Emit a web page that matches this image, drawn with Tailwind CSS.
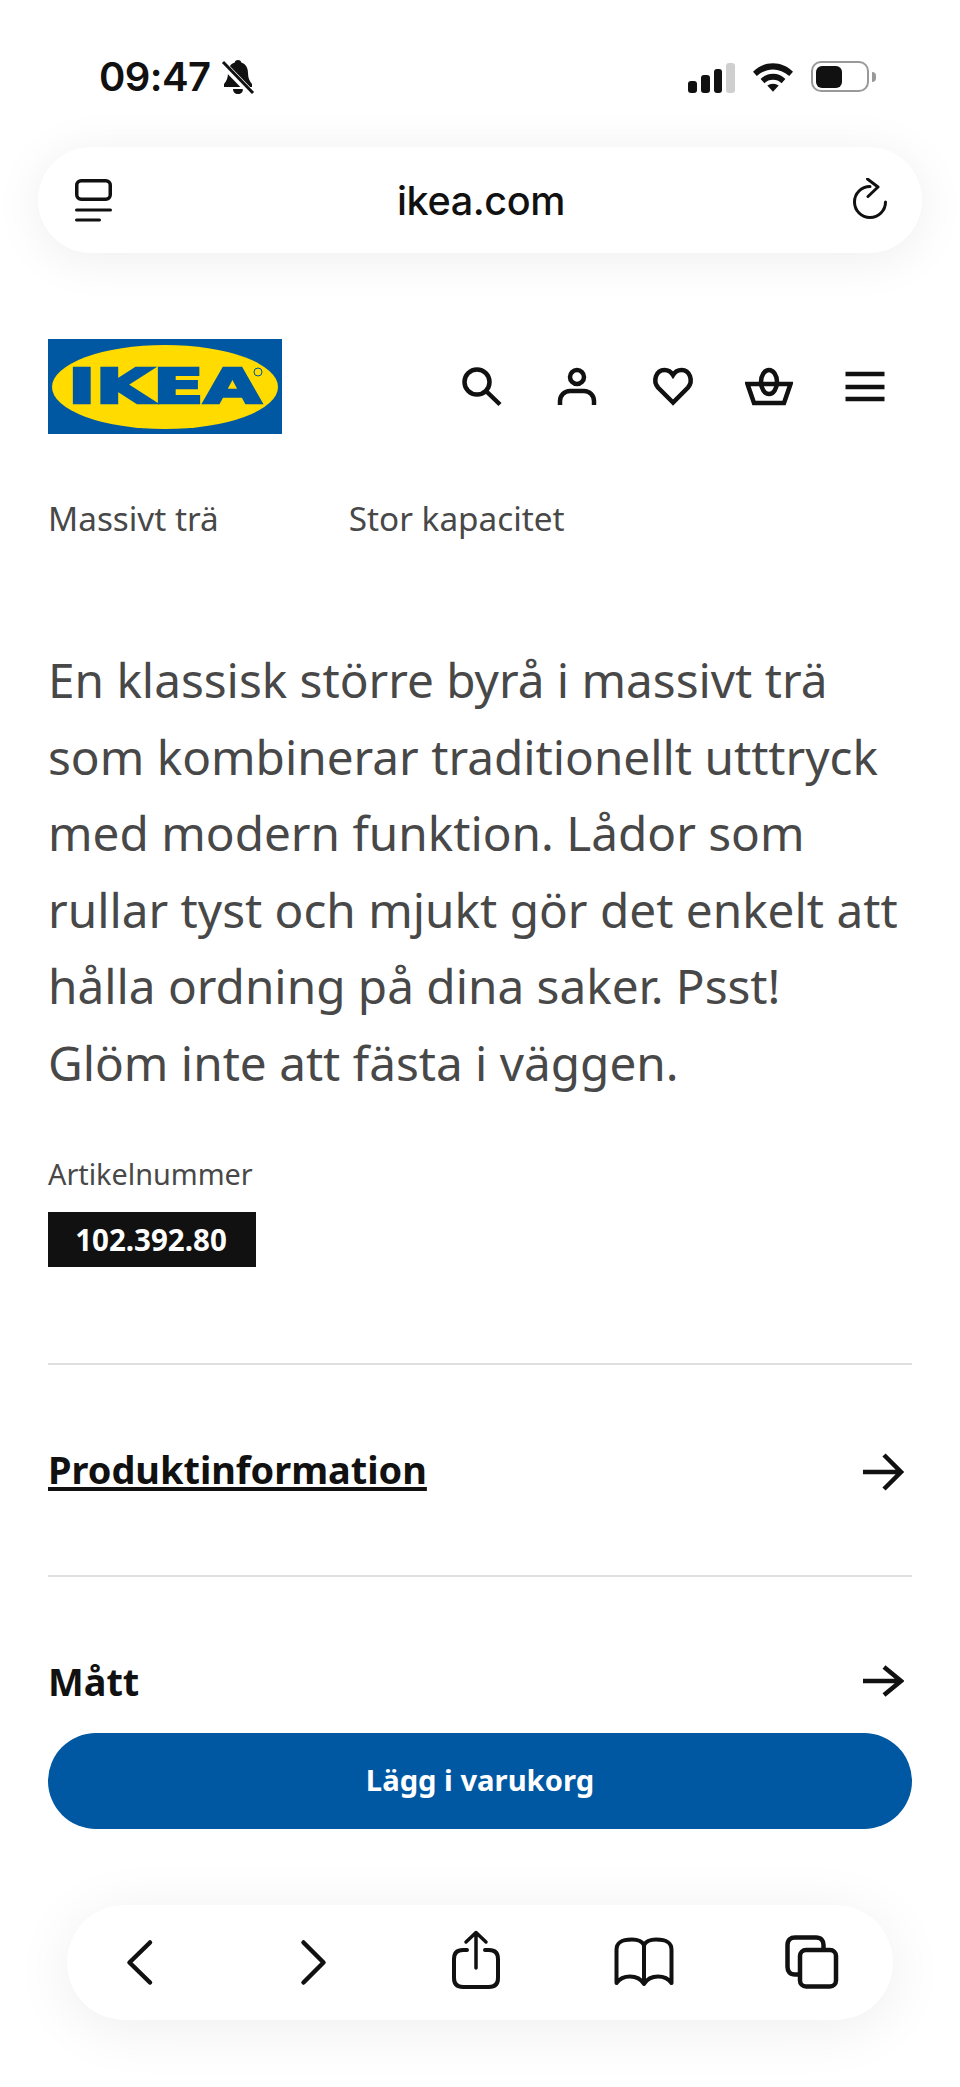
<!DOCTYPE html>
<html lang="sv">
<head>
    <meta charset="UTF-8">
    <meta name="viewport" content="width=device-width, initial-scale=1.0">
    <title>IKEA</title>
    <script src="https://cdn.jsdelivr.net/npm/@tailwindcss/browser@4"></script>
</head>
<body class="bg-white font-['Noto_Sans',sans-serif] text-[#111111]">
<div class="w-[960px] h-[2087px] overflow-hidden flex flex-col">

    <!-- Status bar -->
    <div class="h-[147px] pt-[54px] pl-[99px] pr-[84px] flex items-start justify-between">
        <div class="flex items-center gap-[11px] h-[46px]">
            <span class="font-['Inter',sans-serif] font-semibold text-[40px] leading-[46px] tracking-[-0.6px]">09:47</span>
            <svg width="34" height="36" viewBox="0 0 34 36" fill="#111">
                <path d="M17 1c-2 0-3 1-3.300 2.500C9 5 7 9 7 14c0 5-1.500 8-4 11v3h28v-3c-2.500-3-4-6-4-11 0-5-2-9-6.700-10.500C20 2 19 1 17 1z"/>
                <path d="M12 30h10c0 3-2 5-5 5s-5-2-5-5z"/>
                <path d="M1 4 31 35" stroke="#fff" stroke-width="7"/>
                <path d="M2 3 32 34" stroke="#111" stroke-width="3"/>
            </svg>
        </div>
        <div class="flex items-start gap-[18px] h-[46px] pt-[9px]">
            <div class="flex items-end gap-[4px] h-[30px] w-[47px]">
                <div class="w-[9px] h-[12px] rounded-[3px] bg-[#111]"></div>
                <div class="w-[9px] h-[18px] rounded-[3px] bg-[#111]"></div>
                <div class="w-[9px] h-[24px] rounded-[3px] bg-[#111]"></div>
                <div class="w-[9px] h-[30px] rounded-[3px] bg-[#cfcfcf]"></div>
            </div>
            <svg width="40" height="29" viewBox="0 0 42 30" fill="#111">
                <path d="M21 0C13 0 6 3 0 9l4 4.500C9 9 15 6.500 21 6.500S33 9 38 13.500L42 9C36 3 29 0 21 0z"/>
                <path d="M21 11c-5 0-9.500 2-13 5.500l4 4.500c2.500-2.500 5.500-3.700 9-3.700s6.500 1.200 9 3.700l4-4.500C30.500 13 26 11 21 11z"/>
                <path d="M21 21.500c-2.500 0-4.500 .8-6 2l6 6.500 6-6.500c-1.500-1.200-3.500-2-6-2z"/>
            </svg>
            <div class="flex items-center -mt-[2px] gap-[3px]">
                <div class="w-[58px] h-[31px] rounded-[10px] border-[2.500px] border-[#999999] p-[2.500px]">
                    <div class="w-[26px] h-full rounded-[6px] bg-[#111]"></div>
                </div>
                <div class="w-[4px] h-[10px] rounded-r-full bg-[#999999]"></div>
            </div>
        </div>
    </div>

    <!-- Address bar -->
    <div class="mx-[38px] h-[106px] shrink-0 rounded-[53px] bg-white shadow-[0_6px_50px_rgba(0,0,0,0.07)] flex items-center justify-between pl-[37px] pr-[34px]">
        <svg width="37" height="44" viewBox="0 0 37 44" fill="none" stroke="#111" class="mt-[2px]">
            <rect x="1.750" y="1.750" width="33.500" height="18.500" rx="4.500" stroke-width="3.500"/>
            <path d="M1.500 31h34" stroke-width="3" stroke-linecap="round"/>
            <path d="M1.500 41h23" stroke-width="3" stroke-linecap="round"/>
        </svg>
        <span class="font-['Inter',sans-serif] font-medium text-[39.600px] leading-[46px] tracking-[-0.4px] mt-[2px]">ikea.com</span>
        <svg width="38" height="44" viewBox="0 0 38 44" fill="none" stroke="#111" stroke-width="3" stroke-linecap="round" stroke-linejoin="round">
            <path d="M20 8.500A15.500 15.500 0 1 0 35.500 24"/>
            <path d="M17.500 1 28 9 18 18.500"/>
        </svg>
    </div>

    <!-- Logo and navigation -->
    <div class="mt-[86px] pl-[48px] pr-[71px] flex items-center justify-between">
        <svg width="234" height="95" viewBox="0 0 234 95">
            <rect width="234" height="95" fill="#0058a3"/>
            <ellipse cx="117" cy="48" rx="113" ry="42" fill="#ffdb00"/>
            <text x="20" y="64" font-family="DejaVu Sans" font-weight="700" font-size="48" fill="#0058a3" stroke="#0058a3" stroke-width="2.500" textLength="193" lengthAdjust="spacingAndGlyphs">IKEA</text>
            <circle cx="210" cy="33" r="4" fill="none" stroke="#0058a3" stroke-width="1"/>
        </svg>
        <div class="flex items-center gap-[48px]">
            <svg width="48" height="48" viewBox="0 0 48 48" fill="none" stroke="#111" stroke-width="4.500" class="translate-x-[1px]">
                <circle cx="19" cy="19" r="12.500"/>
                <path d="M28 28l14 13.500"/>
            </svg>
            <svg width="48" height="48" viewBox="0 0 48 48" fill="none" stroke="#111" stroke-width="4.500">
                <circle cx="24" cy="14" r="7"/>
                <path d="M7 42v-4a10 10 0 0 1 10-10h14a10 10 0 0 1 10 10v4"/>
            </svg>
            <svg width="48" height="48" viewBox="0 0 48 48" fill="none" stroke="#111" stroke-width="4.500">
                <path d="M24 39.500L9 24.500C3.500 18 7 7 15.500 7c4 0 7 2.500 8.500 5 1.500-2.500 4.500-5 8.500-5C41 7 44.500 18 39 24.500z"/>
            </svg>
            <svg width="48" height="48" viewBox="0 0 48 48" fill="none" stroke="#111" stroke-width="4.500">
                <path d="M2.500 21h43l-6.500 19H9z"/>
                <ellipse cx="24" cy="19" rx="8" ry="12"/>
            </svg>
            <svg width="48" height="48" viewBox="0 0 48 48" fill="none" stroke="#111" stroke-width="4.500">
                <path d="M4.500 11h39M4.500 24h39M4.500 36h39"/>
            </svg>
        </div>
    </div>

    <!-- Tags -->
    <div class="mt-[59px] px-[48px] flex gap-[130px] text-[33.300px] leading-[50px] text-[#484848]">
        <span>Massivt trä</span>
        <span>Stor kapacitet</span>
    </div>

    <!-- Description -->
    <p class="mt-[99px] px-[48px] text-[47.700px] leading-[76.600px] text-[#484848]">En klassisk större byrå i massivt trä som kombinerar traditionellt utttryck med modern funktion. Lådor som rullar tyst och mjukt gör det enkelt att hålla ordning på dina saker. Psst! Glöm inte att fästa i väggen.</p>

    <!-- Article number -->
    <div class="mt-[52px] px-[48px] text-[28.800px] leading-[40px] text-[#484848]">Artikelnummer</div>
    <div class="mt-[18px] ml-[48px] w-[208px] h-[55px] pr-[2px] bg-[#111111] text-white font-bold text-[29.500px] leading-[55px] text-center">102.392.80</div>

    <!-- Sections -->
    <div class="mt-[96px] mx-[48px] border-t-[2px] border-[#dfdfdf] h-[212px] flex items-center justify-between pr-[8px] pb-[2px]">
        <span class="font-bold text-[37.900px] leading-[50px] underline underline-offset-[3px] decoration-[4px]">Produktinformation</span>
        <svg width="42" height="40" viewBox="0 0 42 40" fill="none" stroke="#111" stroke-width="4.500" class="mt-[6px]">
            <path d="M1 20h37M22 3l17 17-17 17"/>
        </svg>
    </div>
    <div class="mx-[48px] border-t-[2px] border-[#dfdfdf] pt-[79px] h-[158px] flex items-start justify-between pr-[8px]">
        <span class="font-bold text-[37.900px] leading-[50px]">Mått</span>
        <svg width="42" height="40" viewBox="0 0 42 40" fill="none" stroke="#111" stroke-width="4.500" class="mt-[5px]">
            <path d="M1 20h37M22 6l17 14-17 14"/>
        </svg>
    </div>

    <!-- Add to cart -->
    <div class="mx-[48px] h-[96px] shrink-0 rounded-[48px] bg-[#0058a3] text-white font-bold text-[29.200px] flex items-center justify-center">Lägg i varukorg</div>

    <!-- Browser toolbar -->
    <div class="mt-[76px] mx-[67px] h-[115px] shrink-0 rounded-[58px] bg-white shadow-[0_8px_60px_rgba(0,0,0,0.07)] flex items-center justify-between pl-[41px] pr-[49px]">
        <svg width="64" height="64" viewBox="0 0 64 64" fill="none" stroke="#111" stroke-width="4.500" stroke-linecap="round" stroke-linejoin="round">
            <path d="M42 12.500 21.500 32.500 42 52.500"/>
        </svg>
        <svg width="64" height="64" viewBox="0 0 64 64" fill="none" stroke="#111" stroke-width="4.500" stroke-linecap="round" stroke-linejoin="round">
            <path d="M27.500 12.500 47.500 32.500 27.500 52.500"/>
        </svg>
        <svg width="64" height="64" viewBox="0 0 64 64" fill="none" stroke="#111" stroke-width="4" stroke-linecap="round" stroke-linejoin="round">
            <path d="M23 20h-4c-6 0-9 3-9 9v19c0 6 3 9 9 9h26c6 0 9-3 9-9V29c0-6-3-9-9-9h-4"/>
            <path d="M32 38V3.500M22 12l10-9.500L42 12" stroke-width="3.500"/>
        </svg>
        <svg width="64" height="64" viewBox="0 0 64 64" fill="none" stroke="#111" stroke-width="4" stroke-linejoin="round">
            <path d="M32 15C30 11 26 9.500 20 9.500 10 9.500 4.500 12 4.500 20v33C8 48 13 46.500 18 46.500c6 0 11 2.500 14 7.500 3-5 8-7.500 14-7.500 5 0 10 1.500 13.500 6.500V20c0-8-5.500-10.500-15.500-10.500-6 0-10 1.500-12 5.500zM32 15v39"/>
        </svg>
        <svg width="64" height="64" viewBox="0 0 64 64" fill="none" stroke="#111" stroke-width="4.500">
            <path d="M18 44.500h-3c-5 0-7.500-3-7.500-7.500V15c0-5 3-7.500 7.500-7.500h21c5 0 7.500 3 7.500 7.500v3"/>
            <rect x="20" y="20" width="36" height="36.500" rx="6"/>
        </svg>
    </div>
</div>
</body>
</html>
